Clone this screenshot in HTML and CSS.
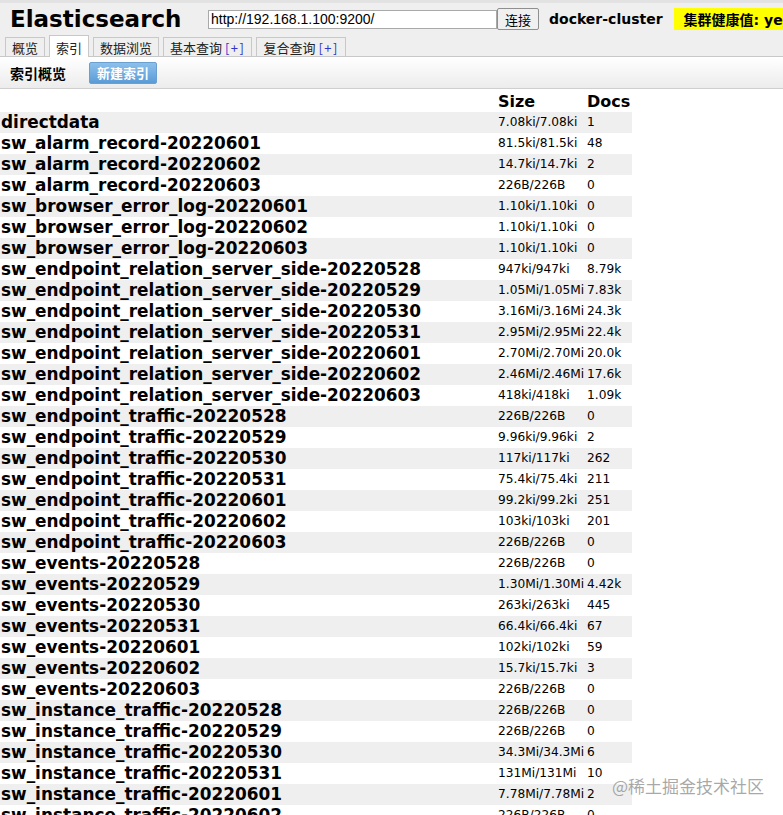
FILE: index.html
```html
<!DOCTYPE html>
<html>
<head>
<meta charset="utf-8">
<link rel="stylesheet" href="styles.css">
</head>
<body>
<div class="top">
  <div class="header">
    <h1 class="logo">Elasticsearch</h1>
    <input class="url" type="text" value="http://192.168.1.100:9200/">
    <button class="connect">连接</button>
    <span class="cluster">docker-cluster</span>
    <span class="health">集群健康值: yellow (36 of 72)</span>
  </div>
  <div class="tabs">
    <span class="tab">概览</span>
    <span class="tab active">索引</span>
    <span class="tab">数据浏览</span>
    <span class="tab">基本查询 <em>[+]</em></span>
    <span class="tab">复合查询 <em>[+]</em></span>
  </div>
</div>
<div class="toolbar">
  <span class="title">索引概览</span>
  <button class="newidx">新建索引</button>
</div>
<table class="idx">
  <thead>
    <tr><th class="n"></th><th class="s">Size</th><th class="d">Docs</th></tr>
  </thead>
  <tbody>
    <tr><td class="n">directdata</td><td class="s">7.08ki/7.08ki</td><td class="d">1</td></tr>
    <tr><td class="n">sw_alarm_record-20220601</td><td class="s">81.5ki/81.5ki</td><td class="d">48</td></tr>
    <tr><td class="n">sw_alarm_record-20220602</td><td class="s">14.7ki/14.7ki</td><td class="d">2</td></tr>
    <tr><td class="n">sw_alarm_record-20220603</td><td class="s">226B/226B</td><td class="d">0</td></tr>
    <tr><td class="n">sw_browser_error_log-20220601</td><td class="s">1.10ki/1.10ki</td><td class="d">0</td></tr>
    <tr><td class="n">sw_browser_error_log-20220602</td><td class="s">1.10ki/1.10ki</td><td class="d">0</td></tr>
    <tr><td class="n">sw_browser_error_log-20220603</td><td class="s">1.10ki/1.10ki</td><td class="d">0</td></tr>
    <tr><td class="n">sw_endpoint_relation_server_side-20220528</td><td class="s">947ki/947ki</td><td class="d">8.79k</td></tr>
    <tr><td class="n">sw_endpoint_relation_server_side-20220529</td><td class="s">1.05Mi/1.05Mi</td><td class="d">7.83k</td></tr>
    <tr><td class="n">sw_endpoint_relation_server_side-20220530</td><td class="s">3.16Mi/3.16Mi</td><td class="d">24.3k</td></tr>
    <tr><td class="n">sw_endpoint_relation_server_side-20220531</td><td class="s">2.95Mi/2.95Mi</td><td class="d">22.4k</td></tr>
    <tr><td class="n">sw_endpoint_relation_server_side-20220601</td><td class="s">2.70Mi/2.70Mi</td><td class="d">20.0k</td></tr>
    <tr><td class="n">sw_endpoint_relation_server_side-20220602</td><td class="s">2.46Mi/2.46Mi</td><td class="d">17.6k</td></tr>
    <tr><td class="n">sw_endpoint_relation_server_side-20220603</td><td class="s">418ki/418ki</td><td class="d">1.09k</td></tr>
    <tr><td class="n">sw_endpoint_traffic-20220528</td><td class="s">226B/226B</td><td class="d">0</td></tr>
    <tr><td class="n">sw_endpoint_traffic-20220529</td><td class="s">9.96ki/9.96ki</td><td class="d">2</td></tr>
    <tr><td class="n">sw_endpoint_traffic-20220530</td><td class="s">117ki/117ki</td><td class="d">262</td></tr>
    <tr><td class="n">sw_endpoint_traffic-20220531</td><td class="s">75.4ki/75.4ki</td><td class="d">211</td></tr>
    <tr><td class="n">sw_endpoint_traffic-20220601</td><td class="s">99.2ki/99.2ki</td><td class="d">251</td></tr>
    <tr><td class="n">sw_endpoint_traffic-20220602</td><td class="s">103ki/103ki</td><td class="d">201</td></tr>
    <tr><td class="n">sw_endpoint_traffic-20220603</td><td class="s">226B/226B</td><td class="d">0</td></tr>
    <tr><td class="n">sw_events-20220528</td><td class="s">226B/226B</td><td class="d">0</td></tr>
    <tr><td class="n">sw_events-20220529</td><td class="s">1.30Mi/1.30Mi</td><td class="d">4.42k</td></tr>
    <tr><td class="n">sw_events-20220530</td><td class="s">263ki/263ki</td><td class="d">445</td></tr>
    <tr><td class="n">sw_events-20220531</td><td class="s">66.4ki/66.4ki</td><td class="d">67</td></tr>
    <tr><td class="n">sw_events-20220601</td><td class="s">102ki/102ki</td><td class="d">59</td></tr>
    <tr><td class="n">sw_events-20220602</td><td class="s">15.7ki/15.7ki</td><td class="d">3</td></tr>
    <tr><td class="n">sw_events-20220603</td><td class="s">226B/226B</td><td class="d">0</td></tr>
    <tr><td class="n">sw_instance_traffic-20220528</td><td class="s">226B/226B</td><td class="d">0</td></tr>
    <tr><td class="n">sw_instance_traffic-20220529</td><td class="s">226B/226B</td><td class="d">0</td></tr>
    <tr><td class="n">sw_instance_traffic-20220530</td><td class="s">34.3Mi/34.3Mi</td><td class="d">6</td></tr>
    <tr><td class="n">sw_instance_traffic-20220531</td><td class="s">131Mi/131Mi</td><td class="d">10</td></tr>
    <tr><td class="n">sw_instance_traffic-20220601</td><td class="s">7.78Mi/7.78Mi</td><td class="d">2</td></tr>
    <tr><td class="n">sw_instance_traffic-20220602</td><td class="s">226B/226B</td><td class="d">0</td></tr>
  </tbody>
</table>
<div class="watermark">@稀土掘金技术社区</div>
</body>
</html>
```
FILE: styles.css
```css
html, body {
  margin: 0;
  padding: 0;
  overflow: hidden;
  background: #fff;
}
body {
  font-family: "DejaVu Sans", Verdana, "Noto Sans CJK SC", sans-serif;
  color: #000;
  width: 783px;
  height: 815px;
  position: relative;
}
.top {
  background: #efefef;
  border-top: 3px solid #e2e2e2;
  border-bottom: 1px solid #c8c8c8;
}
.header {
  display: flex;
  align-items: center;
  height: 32px;
  white-space: nowrap;
  overflow: hidden;
}
.header > * {
  flex-shrink: 0;
}
.logo {
  margin: 0 0 0 10px;
  font-size: 23px;
  font-weight: bold;
  width: 198px;
  line-height: 32px;
}
.url {
  width: 283px;
  height: 15px;
  padding: 1px 2px;
  margin: 0;
  border: 1px solid #a9a9a9;
  font-family: "Liberation Sans", Arial, sans-serif;
  font-size: 14px;
  background: #fff;
}
.connect {
  margin: 0;
  height: 22px;
  width: 42px;
  padding: 0;
  border: 1px solid #8f8f8f;
  border-radius: 2px;
  background: #f0f0f0;
  font-family: "Noto Sans CJK SC", sans-serif;
  font-size: 13px;
}
.cluster {
  margin-left: 10px;
  font-weight: bold;
  font-size: 14px;
}
.health {
  margin-left: 11px;
  background: #ffff00;
  padding: 1px 10px;
  font-weight: bold;
  font-size: 14px;
  font-family: "DejaVu Sans", "Noto Sans CJK SC", sans-serif;
}
.tabs {
  display: flex;
  align-items: flex-end;
  height: 21px;
  padding-left: 5px;
  gap: 4px;
  white-space: nowrap;
}
.tab {
  display: block;
  height: 19px;
  line-height: 20px;
  padding: 0 6px;
  border: 1px solid #c8c8c8;
  border-bottom: none;
  font-family: "Noto Sans CJK SC", sans-serif;
  font-size: 13px;
  color: #222;
  margin-bottom: -1px;
}
.tab.active {
  background: #fff;
  height: 21px;
  line-height: 23px;
  padding: 0 6px;
}
.tab em {
  font-style: normal;
  color: #3333cc;
  letter-spacing: 1.5px;
}
.toolbar {
  display: flex;
  align-items: center;
  height: 31px;
  padding-left: 10px;
  background: linear-gradient(#ffffff, #ececec);
  border-bottom: 1px solid #cfcfcf;
}
.title {
  font-family: "Noto Sans CJK SC", sans-serif;
  font-weight: bold;
  font-size: 14px;
  width: 79px;
}
.newidx {
  height: 22px;
  padding: 0 7px;
  border: 1px solid #6a9fd0;
  border-radius: 2px;
  background: linear-gradient(#8cc0ec, #5b9bd6);
  color: #fff;
  font-family: "Noto Sans CJK SC", sans-serif;
  font-weight: bold;
  font-size: 13px;
}
.idx {
  border-collapse: collapse;
  width: 632px;
  margin-top: 2px;
}
.idx th, .idx td {
  padding: 0 0 0 1px;
  height: 21px;
  line-height: 21px;
  text-align: left;
  white-space: nowrap;
  vertical-align: middle;
}
.idx th {
  font-size: 16px;
  font-weight: bold;
}
.idx td.n {
  font-size: 16.9px;
  font-weight: bold;
  width: 496px;
}
.idx td.s, .idx td.d {
  font-size: 12.2px;
  font-family: "DejaVu Sans", Tahoma, sans-serif;
}
.idx td.s { width: 88px; }
.idx tbody tr:nth-child(odd) { background: #efefef; }
.watermark {
  position: absolute;
  left: 612px;
  top: 773px;
  font-family: "Noto Sans CJK SC", sans-serif;
  font-size: 17px;
  color: rgba(140, 140, 140, 0.75);
}
```
